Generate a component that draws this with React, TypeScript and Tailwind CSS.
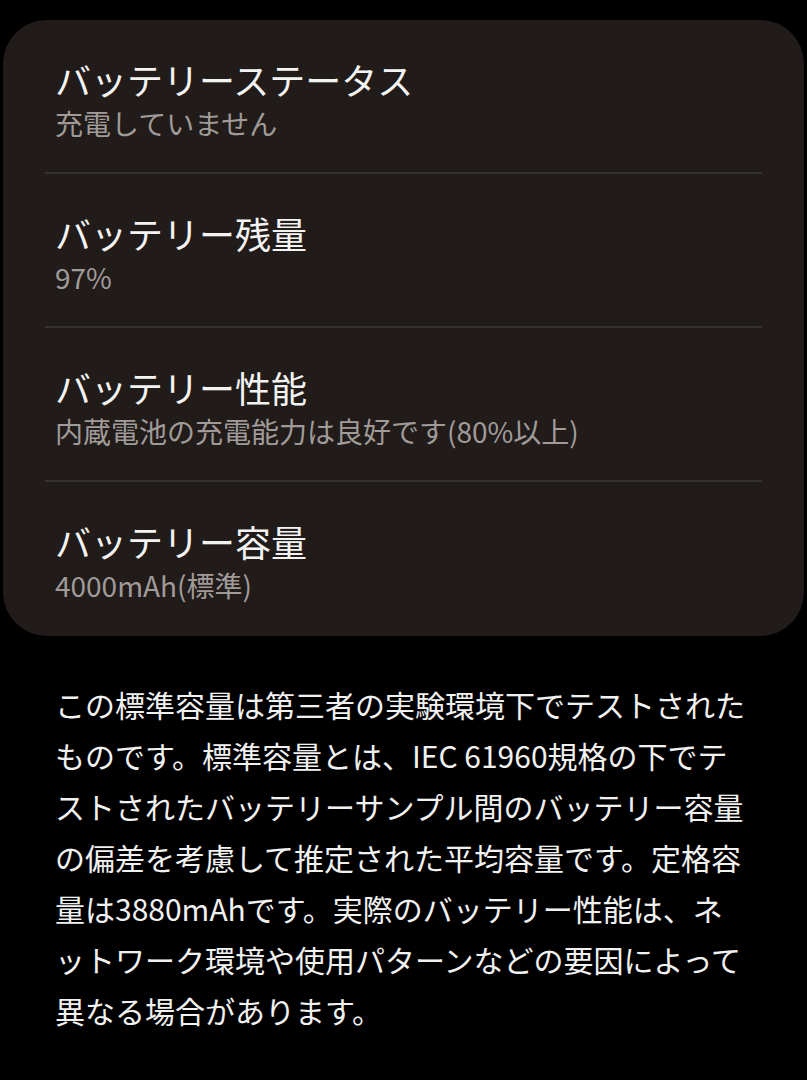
import React from 'react';

interface InfoRow {
  title: string;
  value: string;
}

const rows: InfoRow[] = [
  { title: 'バッテリーステータス', value: '充電していません' },
  { title: 'バッテリー残量', value: '97%' },
  { title: 'バッテリー性能', value: '内蔵電池の充電能力は良好です(80%以上)' },
  { title: 'バッテリー容量', value: '4000mAh(標準)' },
];

const noteLines = [
  'この標準容量は第三者の実験環境下でテストされた',
  'ものです。標準容量とは、IEC 61960規格の下でテ',
  'ストされたバッテリーサンプル間のバッテリー容量',
  'の偏差を考慮して推定された平均容量です。定格容',
  '量は3880mAhです。実際のバッテリー性能は、ネ',
  'ットワーク環境や使用パターンなどの要因によって',
  '異なる場合があります。',
];

export default function App() {
  return (
    <div className="min-h-screen w-full bg-black font-['Noto_Sans_CJK_JP','Noto_Sans',sans-serif] pt-[20px] px-[3px]">
      <div className="rounded-[44px] bg-[#211c1a] px-[42px]">
        {rows.map((row, i) => (
          <div
            key={row.title}
            className={
              i < rows.length - 1
                ? 'h-[154px] pt-[36px] pl-[10px] border-b-2 border-[#36322f]'
                : 'h-[154px] pt-[36px] pl-[10px]'
            }
          >
            <div className="text-[36px] leading-[46px] text-[#f3f3f3] whitespace-nowrap">{row.title}</div>
            <div className="mt-[3px] text-[28px] leading-[36px] text-[#a09b99] whitespace-nowrap">{row.value}</div>
          </div>
        ))}
      </div>
      <p className="mt-[43px] px-[52px] text-[30px] leading-[51px] text-[#f1f1f1] whitespace-nowrap">
        {noteLines.map((line, i) => (
          <React.Fragment key={i}>
            {line}
            {i < noteLines.length - 1 && <br />}
          </React.Fragment>
        ))}
      </p>
    </div>
  );
}
